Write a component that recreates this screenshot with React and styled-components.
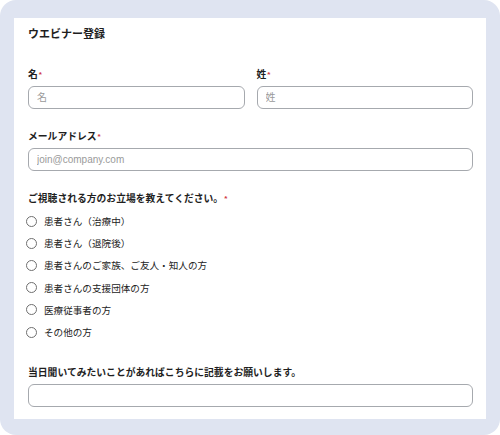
import React from "react";
import styled, { createGlobalStyle } from "styled-components";

const GlobalStyle = createGlobalStyle`
  html, body {
    margin: 0;
    padding: 0;
    background: #ffffff;
  }
  * {
    box-sizing: border-box;
  }
`;

const FONT = `"Liberation Sans", "Noto Sans CJK JP", Arial, sans-serif`;

const options = [
  "患者さん（治療中）",
  "患者さん（退院後）",
  "患者さんのご家族、ご友人・知人の方",
  "患者さんの支援団体の方",
  "医療従事者の方",
  "その他の方",
];

function App() {
  return (
    <>
      <GlobalStyle />
      <Frame>
        <Panel>
          <Title>ウエビナー登録</Title>
          <NameRow>
            <Field>
              <Label>
                名<Required>*</Required>
              </Label>
              <Input placeholder="名" />
            </Field>
            <Field>
              <Label>
                姓<Required>*</Required>
              </Label>
              <Input placeholder="姓" />
            </Field>
          </NameRow>
          <Field>
            <Label>
              メールアドレス<Required>*</Required>
            </Label>
            <Input placeholder="join@company.com" />
          </Field>
          <Group>
            <Label>
              ご視聴される方のお立場を教えてください。<Required>*</Required>
            </Label>
            <RadioList>
              {options.map((opt) => (
                <RadioRow key={opt}>
                  <RadioCircle type="radio" name="role" />
                  <RadioText>{opt}</RadioText>
                </RadioRow>
              ))}
            </RadioList>
          </Group>
          <LastField>
            <Label>当日聞いてみたいことがあればこちらに記載をお願いします。</Label>
            <Input />
          </LastField>
        </Panel>
      </Frame>
    </>
  );
}

const Frame = styled.div`
  width: 500px;
  height: 435px;
  background: #dfe4f1;
  border-radius: 16px;
  padding: 18px 14px 16px 14px;
`;

const Panel = styled.div`
  height: 100%;
  background: #ffffff;
  padding: 8px 13px 0 14px;
  display: flex;
  flex-direction: column;
  font-family: ${FONT};
  color: #1f1f1f;
`;

const Title = styled.div`
  font-size: 11px;
  font-weight: bold;
  line-height: 16px;
  margin-bottom: 26px;
`;

const NameRow = styled.div`
  display: grid;
  grid-template-columns: 1fr 1fr;
  column-gap: 12px;
  margin-bottom: 21px;
`;

const Field = styled.div`
  display: flex;
  flex-direction: column;
  margin-bottom: 21px;

  ${NameRow} & {
    margin-bottom: 0;
  }
`;

const Label = styled.div`
  font-size: 9.8px;
  font-weight: bold;
  line-height: 14px;
  margin-bottom: 4px;
  color: #1f1f1f;
`;

const Required = styled.span`
  color: #d0343f;
  font-size: 8px;
  vertical-align: top;
  margin-left: 1px;
`;

const Input = styled.input`
  width: 100%;
  height: 23px;
  border: 1px solid #a6a9ae;
  border-radius: 6px;
  padding: 0 8px;
  font-family: ${FONT};
  font-size: 10px;
  color: #222;
  background: #fff;
  outline: none;

  &::placeholder {
    color: #9a9a9a;
  }
`;

const Group = styled.div`
  display: flex;
  flex-direction: column;
`;

const RadioList = styled.div`
  display: flex;
  flex-direction: column;
`;

const RadioRow = styled.label`
  display: flex;
  align-items: center;
  height: 22.2px;
  gap: 7px;
`;

const RadioCircle = styled.input`
  appearance: none;
  margin: 0 0 0 -2px;
  width: 11px;
  height: 11px;
  border: 1px solid #6f6f6f;
  border-radius: 50%;
  background: #fff;
`;

const RadioText = styled.span`
  font-size: 9.6px;
  color: #222;
`;

const LastField = styled.div`
  display: flex;
  flex-direction: column;
  margin-top: 23px;
`;

export default App;
